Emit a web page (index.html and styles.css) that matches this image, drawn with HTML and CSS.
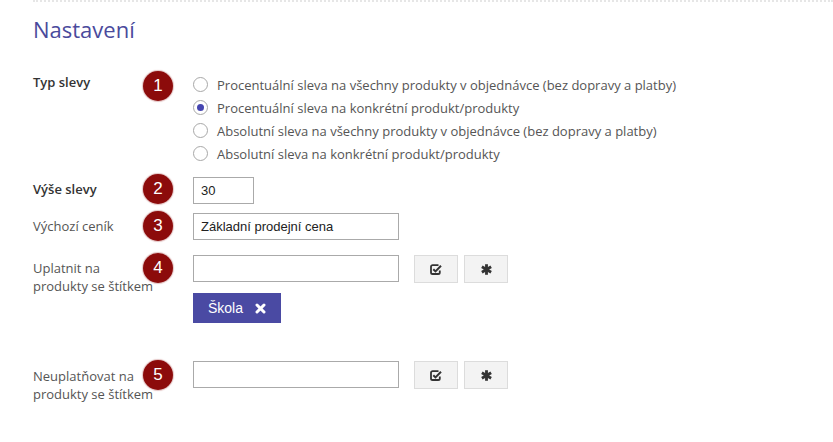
FILE: index.html
```html
<!DOCTYPE html>
<html lang="cs">
<head>
<meta charset="utf-8">
<title>Nastavení</title>
<link rel="stylesheet" href="styles.css">
</head>
<body>
<div class="page">
  <div class="topline"></div>
  <h1 class="title">Nastavení</h1>

  <div class="row row1">
    <div class="label strong">Typ slevy</div>
    <div class="badge">1</div>
    <div class="controls radios">
      <label class="radio"><span class="dot"></span>Procentuální sleva na všechny produkty v objednávce (bez dopravy a platby)</label>
      <label class="radio"><span class="dot checked"></span>Procentuální sleva na konkrétní produkt/produkty</label>
      <label class="radio"><span class="dot"></span>Absolutní sleva na všechny produkty v objednávce (bez dopravy a platby)</label>
      <label class="radio"><span class="dot"></span>Absolutní sleva na konkrétní produkt/produkty</label>
    </div>
  </div>

  <div class="row row2">
    <div class="label strong">Výše slevy</div>
    <div class="badge">2</div>
    <div class="controls">
      <div class="input small">30</div>
    </div>
  </div>

  <div class="row row3">
    <div class="label">Výchozí ceník</div>
    <div class="badge">3</div>
    <div class="controls">
      <div class="input wide">Základní prodejní cena</div>
    </div>
  </div>

  <div class="row row4">
    <div class="label two">Uplatnit na<br>produkty se štítkem</div>
    <div class="badge">4</div>
    <div class="controls">
      <div class="line">
        <div class="input wide"></div>
        <div class="btn first"><svg width="12" height="11" viewBox="0 0 12 11"><path d="M8.5 1.2H2.6A1.6 1.6 0 0 0 1 2.8v5.6A1.6 1.6 0 0 0 2.6 10h5.6a1.6 1.6 0 0 0 1.6-1.6V6.6" fill="none" stroke="#333" stroke-width="1.8"/><path d="M3.3 5.2l2.2 2.2L11 1.8" fill="none" stroke="#333" stroke-width="2"/></svg></div>
        <div class="btn"><svg width="11" height="11" viewBox="0 0 10 10"><g stroke="#333" stroke-width="2.6"><line x1="5" y1="0.2" x2="5" y2="9.8"/><line x1="0.8" y1="2.6" x2="9.2" y2="7.4"/><line x1="0.8" y1="7.4" x2="9.2" y2="2.6"/></g></svg></div>
      </div>
      <div class="tag">Škola <svg class="x" width="11" height="11" viewBox="0 0 11 11"><g stroke="#fff" stroke-width="3" stroke-linecap="round"><line x1="2" y1="2" x2="9" y2="9"/><line x1="9" y1="2" x2="2" y2="9"/></g></svg></div>
    </div>
  </div>

  <div class="row row5">
    <div class="label two">Neuplatňovat na<br>produkty se štítkem</div>
    <div class="badge">5</div>
    <div class="controls">
      <div class="line">
        <div class="input wide"></div>
        <div class="btn first"><svg width="12" height="11" viewBox="0 0 12 11"><path d="M8.5 1.2H2.6A1.6 1.6 0 0 0 1 2.8v5.6A1.6 1.6 0 0 0 2.6 10h5.6a1.6 1.6 0 0 0 1.6-1.6V6.6" fill="none" stroke="#333" stroke-width="1.8"/><path d="M3.3 5.2l2.2 2.2L11 1.8" fill="none" stroke="#333" stroke-width="2"/></svg></div>
        <div class="btn"><svg width="11" height="11" viewBox="0 0 10 10"><g stroke="#333" stroke-width="2.6"><line x1="5" y1="0.2" x2="5" y2="9.8"/><line x1="0.8" y1="2.6" x2="9.2" y2="7.4"/><line x1="0.8" y1="7.4" x2="9.2" y2="2.6"/></g></svg></div>
      </div>
    </div>
  </div>
</div>
</body>
</html>
```
FILE: styles.css
```css
html, body {
  margin: 0;
  padding: 0;
  background: #fff;
}
.page {
  padding-left: 33px;
  font-family: "Open Sans", "DejaVu Sans", sans-serif;
  color: #555;
  font-size: 13px;
}
.topline {
  height: 0;
  border-top: 2px dotted #e6e6e6;
}
.title {
  margin: 12px 0 0 0;
  font-size: 22px;
  line-height: 30px;
  font-weight: 400;
  color: #4a4a9c;
}
.row {
  display: flex;
  align-items: flex-start;
}
.label {
  width: 110px;
  flex: none;
  font-size: 13px;
  line-height: 20px;
  color: #555;
  white-space: nowrap;
}
.label.strong {
  font-weight: 600;
  color: #333;
}
.label.two {
  line-height: 18px;
}
.badge {
  width: 30px;
  height: 30px;
  flex: none;
  border-radius: 50%;
  background: #8c0b0b;
  box-shadow: 0 0 1px 1px rgba(140, 11, 11, 0.25);
  color: #fff;
  font-family: "Liberation Sans", Arial, sans-serif;
  font-size: 17px;
  line-height: 30px;
  text-align: center;
  position: relative;
}
.controls {
  margin-left: 20px;
}
.row1 { margin-top: 27px; }
.row1 .label { padding-top: 1px; }
.radios { padding-top: 2px; }
.radio {
  display: flex;
  align-items: center;
  height: 23px;
  font-size: 13px;
  color: #555;
}
.dot {
  width: 13px;
  height: 13px;
  border: 1px solid #a8a8a8;
  border-radius: 50%;
  margin-right: 9px;
  flex: none;
  position: relative;
  background: #fff;
}
.dot.checked::after {
  content: "";
  position: absolute;
  left: 3px;
  top: 3px;
  width: 7px;
  height: 7px;
  border-radius: 50%;
  background: #4646b0;
}
.input {
  box-sizing: border-box;
  height: 27px;
  border: 1px solid #aaa;
  font-family: "Liberation Sans", Arial, sans-serif;
  font-size: 13px;
  line-height: 25px;
  color: #222;
  padding-left: 7px;
  background: #fff;
}
.input.small { width: 61px; }
.input.wide { width: 206px; }
.row2 { margin-top: 9px; }
.row2 .label { padding-top: 5px; }
.row2 .controls { padding-top: 3px; }
.row3 { margin-top: 7px; }
.row3 .label { padding-top: 5px; }
.row3 .controls { padding-top: 2px; }
.row4 { margin-top: 12px; }
.row4 .label { padding-top: 6px; }
.row4 .controls { padding-top: 2px; }
.row5 { margin-top: 37px; }
.row5 .label { padding-top: 7px; }
.row5 .controls { padding-top: 1px; }
.line {
  display: flex;
  align-items: flex-start;
}
.btn {
  box-sizing: border-box;
  width: 44px;
  height: 28px;
  margin-left: 6px;
  background: #f3f3f3;
  border: 1px solid #dcdcdc;
  display: flex;
  align-items: center;
  justify-content: center;
}
.btn.first { margin-left: 15px; }
.tag {
  margin-top: 10px;
  width: 88px;
  height: 30px;
  box-sizing: border-box;
  padding-left: 15px;
  background: #4a4aa3;
  color: #fff;
  font-family: "Liberation Sans", Arial, sans-serif;
  font-size: 14px;
  line-height: 30px;
  display: flex;
  align-items: center;
}
.tag .x {
  margin-left: 12px;
}
```
